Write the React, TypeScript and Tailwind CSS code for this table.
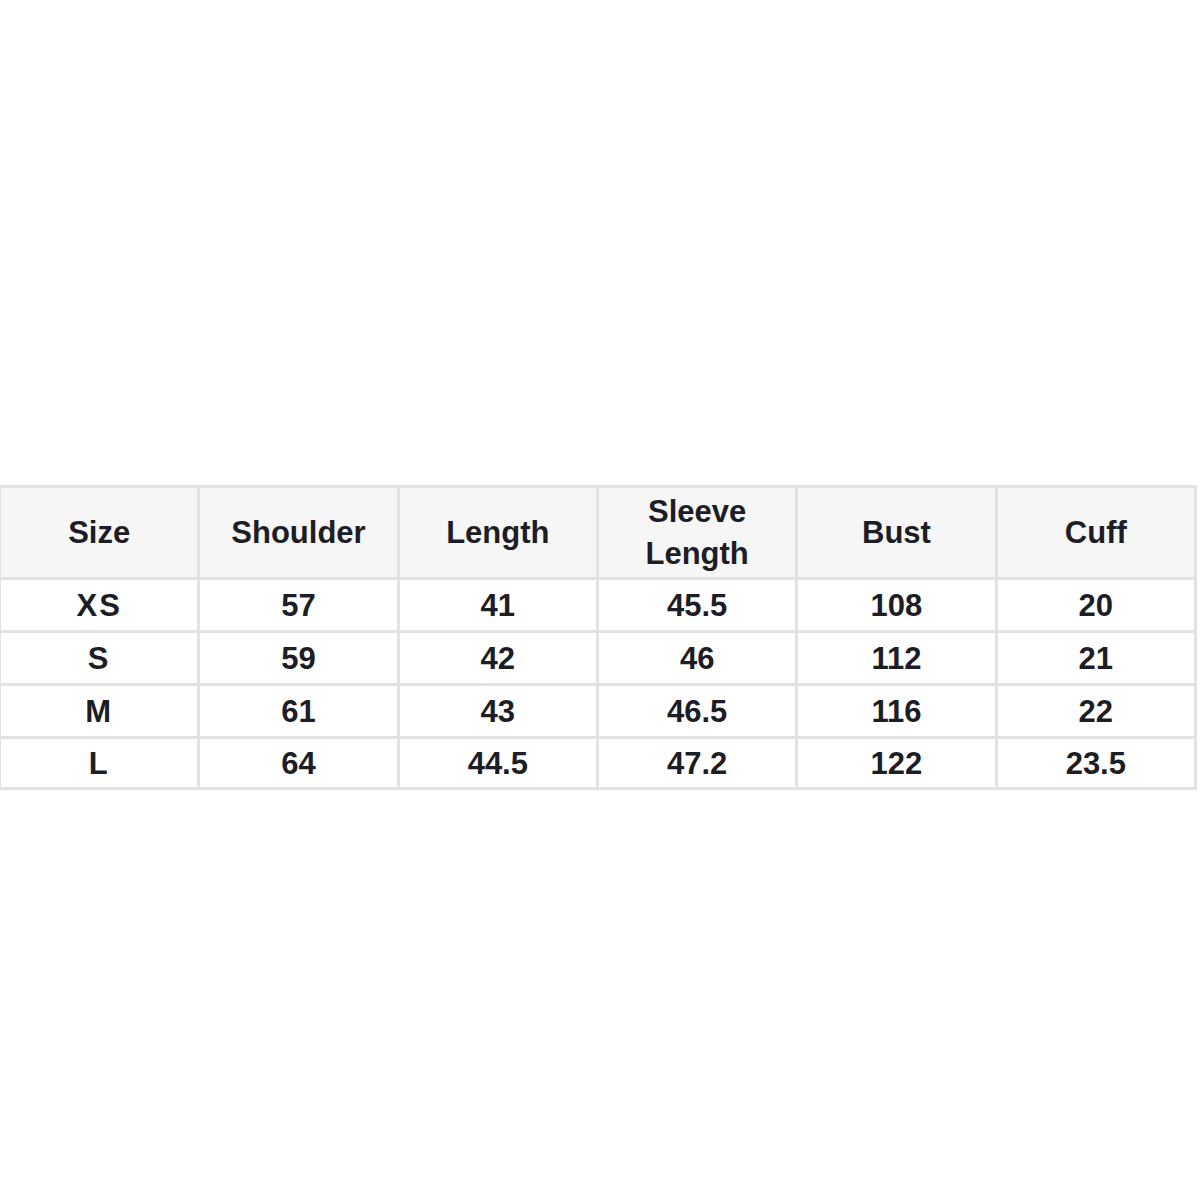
const headers = ['Size', 'Shoulder', 'Length', 'Sleeve Length', 'Bust', 'Cuff']

const rows = [
  ['XS', '57', '41', '45.5', '108', '20'],
  ['S', '59', '42', '46', '112', '21'],
  ['M', '61', '43', '46.5', '116', '22'],
  ['L', '64', '44.5', '47.2', '122', '23.5'],
]

export default function App() {
  return (
    <div className="w-[1200px] h-[1200px] overflow-hidden bg-white pt-[485px] font-['Liberation_Sans',Arial,sans-serif] text-[#1d1d26]">
      <table className="-ml-[2px] w-[1199px] table-fixed border-collapse font-bold">
        <thead>
          <tr className="h-[92px] bg-[#f6f6f6]">
            {headers.map((h) => (
              <th
                key={h}
                className="border-[3px] border-[#e2e2e2] px-6 text-center text-[31px] leading-[42px] font-bold"
              >
                {h}
              </th>
            ))}
          </tr>
        </thead>
        <tbody>
          {rows.map((r, ri) => (
            <tr key={r[0]} className={`${ri === 3 ? 'h-[51px]' : 'h-[53px]'} bg-white`}>
              {r.map((c, i) => (
                <td
                  key={i}
                  className={`border-[3px] border-[#e2e2e2] text-center text-[31px] leading-none ${i === 0 ? 'tracking-[2px]' : ''}`}
                >
                  {c}
                </td>
              ))}
            </tr>
          ))}
        </tbody>
      </table>
    </div>
  )
}
